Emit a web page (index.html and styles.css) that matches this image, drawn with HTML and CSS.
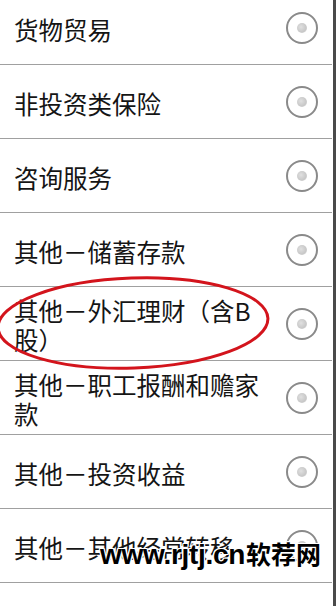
FILE: index.html
```html
<!DOCTYPE html>
<html lang="zh-CN">
<head>
<meta charset="utf-8">
<title>收入类型</title>
<link rel="stylesheet" href="styles.css">
</head>
<body>
<div class="screen">
  <ul class="list">
    <li class="row"><span class="label">货物贸易</span><span class="radio"></span></li>
    <li class="row"><span class="label">非投资类保险</span><span class="radio"></span></li>
    <li class="row"><span class="label">咨询服务</span><span class="radio"></span></li>
    <li class="row"><span class="label">其他－储蓄存款</span><span class="radio"></span></li>
    <li class="row"><span class="label">其他－外汇理财（含B股）</span><span class="radio"></span></li>
    <li class="row"><span class="label">其他－职工报酬和赡家款</span><span class="radio"></span></li>
    <li class="row"><span class="label">其他－投资收益</span><span class="radio"></span></li>
    <li class="row"><span class="label">其他－其他经常转移</span><span class="radio"></span></li>
  </ul>
</div>
<svg class="annotation" viewBox="0 0 336 606" width="336" height="606" aria-hidden="true">
  <ellipse cx="133" cy="323" rx="135" ry="45" transform="rotate(-2 133 323)" fill="none" stroke="#d3141c" stroke-width="3"/>
</svg>
<div class="watermark"><span class="wm-latin">www.rjtj.cn</span><span class="wm-cjk">软荐网</span></div>
</body>
</html>
```
FILE: styles.css
```css
html, body {
  margin: 0;
  padding: 0;
  background: #ffffff;
}
body {
  width: 336px;
  height: 606px;
  overflow: hidden;
  position: relative;
  font-family: "Noto Sans CJK SC", "Noto Sans", sans-serif;
}
.screen {
  width: 333px;
  height: 606px;
  border-right: 3px solid #4a4a4a;
  overflow: hidden;
}
.list {
  list-style: none;
  margin: -9px 0 0 0;
  padding: 0;
}
.row {
  height: 73px;
  border-bottom: 1px solid #a0a0a0;
  display: flex;
  align-items: center;
  gap: 20px;
  padding: 0 14px 0 14px;
  margin-right: 1px;
}
.label {
  flex: 1;
  font-size: 24.5px;
  line-height: 29px;
  color: #151515;
  padding-top: 3px;
}
.radio {
  flex: none;
  width: 28px;
  height: 28px;
  border: 2px solid #8a8a8a;
  border-radius: 50%;
  position: relative;
  background: #fff;
}
.radio::after {
  content: "";
  position: absolute;
  left: 50%;
  top: 50%;
  width: 10px;
  height: 10px;
  margin: -5px 0 0 -5px;
  border-radius: 50%;
  background: radial-gradient(circle at 40% 40%, #e0e0e0 0%, #c8c8c8 60%, #e6e6e6 100%);
}
.annotation {
  position: absolute;
  left: 0;
  top: 0;
  pointer-events: none;
}
.watermark {
  position: absolute;
  left: 100px;
  top: 535px;
  display: flex;
  align-items: baseline;
  color: #000;
  font-weight: bold;
  white-space: nowrap;
  text-shadow:
    1px 0 0 #fff, -1px 0 0 #fff, 0 1px 0 #fff, 0 -1px 0 #fff,
    1px 1px 0 #fff, -1px -1px 0 #fff, 1px -1px 0 #fff, -1px 1px 0 #fff;
}
.wm-latin {
  font-family: "Liberation Sans", Arial, sans-serif;
  font-size: 28px;
  letter-spacing: -0.3px;
}
.wm-cjk {
  font-family: "Noto Sans CJK SC", sans-serif;
  font-size: 25px;
  margin-left: 1px;
}
```
